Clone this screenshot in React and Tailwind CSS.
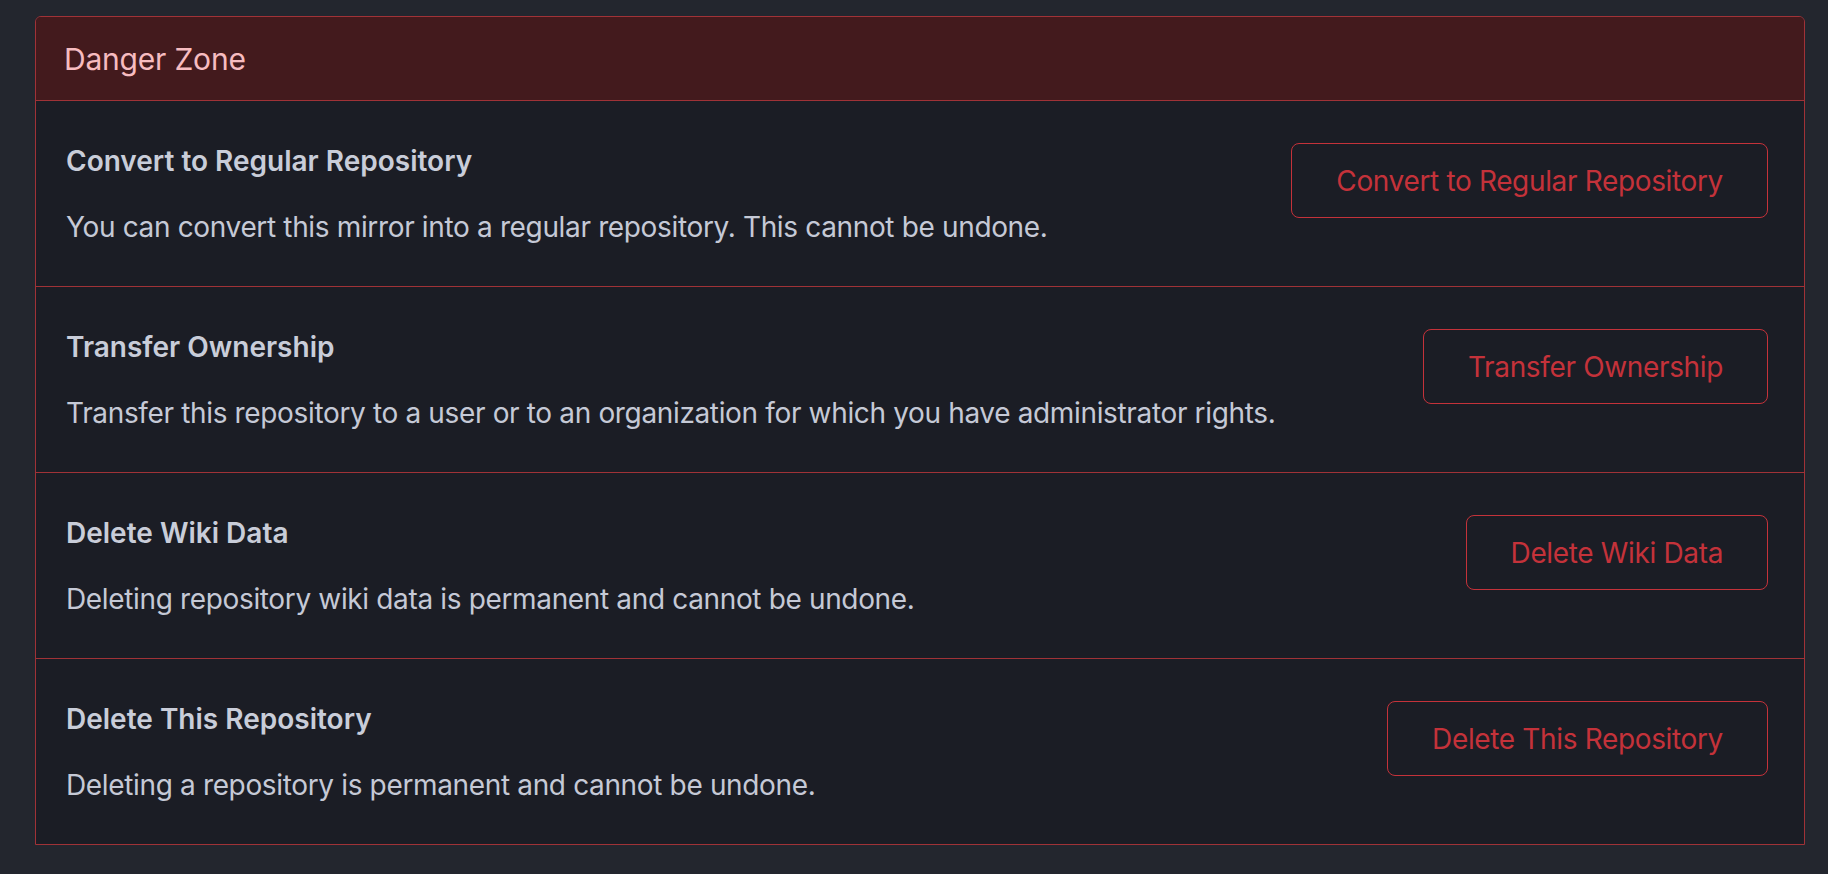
const items = [
  {
    title: "Convert to Regular Repository",
    desc: "You can convert this mirror into a regular repository. This cannot be undone.",
    action: "Convert to Regular Repository",
  },
  {
    title: "Transfer Ownership",
    desc: "Transfer this repository to a user or to an organization for which you have administrator rights.",
    action: "Transfer Ownership",
  },
  {
    title: "Delete Wiki Data",
    desc: "Deleting repository wiki data is permanent and cannot be undone.",
    action: "Delete Wiki Data",
  },
  {
    title: "Delete This Repository",
    desc: "Deleting a repository is permanent and cannot be undone.",
    action: "Delete This Repository",
  },
];

export default function App() {
  return (
    <div className="min-h-screen bg-[#23262e] pt-[16px] pl-[35px] pr-[23px] pb-[29px] font-['Inter','Noto_Sans',sans-serif]">
      <div className="border border-[#a03237] rounded-t-[6px] overflow-hidden">
        {/* header */}
        <div className="h-[84px] flex items-center px-[28px] bg-[#431a1d] border-b border-[#a03237]">
          <h2 className="text-[30px] leading-none tracking-[-0.2px] text-[#f7bcc0]">Danger Zone</h2>
        </div>

        {items.map((item, index) => (
          <div key={index} className={`flex items-start justify-between bg-[#1b1d25] pl-[30px] pr-[36px] pt-[39px] pb-[38px] ${index < items.length - 1 ? "border-b border-[#a03237]" : ""}`}>
            <div className="flex flex-col gap-[24px]">
              <div className="text-[28px] leading-[42px] font-semibold text-[#c9cdd9]">{item.title}</div>
              <p className="text-[28px] leading-[42px] tracking-[-0.35px] text-[#c5c9d6]">{item.desc}</p>
            </div>
            <button type="button" className="mt-[3px] h-[75px] px-[44px] flex items-center shrink-0 rounded-[8px] border border-[#c4323a] text-[28px] leading-none tracking-[-0.35px] text-[#c4323a] bg-transparent">
              {item.action}
            </button>
          </div>
        ))}
      </div>
    </div>
  );
}
